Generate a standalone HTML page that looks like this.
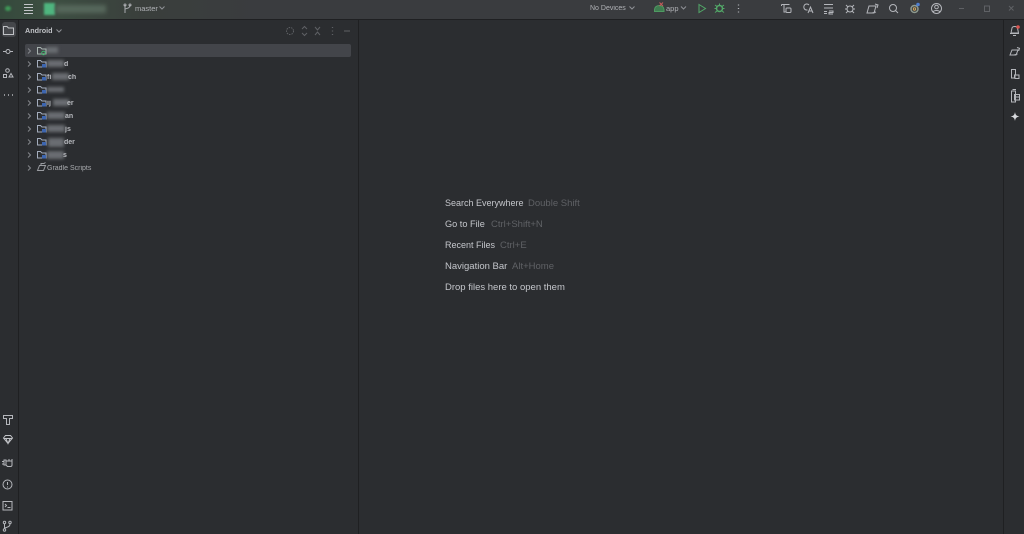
<!DOCTYPE html>
<html><head><meta charset="utf-8"><style>
html,body{margin:0;padding:0;background:#2b2d30;width:1024px;height:534px;overflow:hidden;font-family:"Liberation Sans","DejaVu Sans",sans-serif}
.t{position:absolute;white-space:nowrap;line-height:12px;filter:blur(.25px)}
.h{font-size:9px;color:#c4c6cb;left:445px}
.k{font-size:9.500px;color:#5f6165}
.n{font-size:7px;color:#b8babf;font-weight:bold;left:47px}
.b{position:absolute;background:#6a6d72;filter:blur(1.5px)}
svg{position:absolute;left:0;top:0;filter:blur(.3px)}
</style></head><body>
<div style="position:absolute;left:0;top:0;width:1024px;height:19px;background:#3a3c3f"></div>
<div style="position:absolute;left:0;top:0;width:260px;height:19px;background:linear-gradient(90deg,#35493c 0,#3d4f42 50px,#3a3f3c 140px,#3a3c3f 100%)"></div>
<div style="position:absolute;left:0;top:19px;width:1024px;height:1px;background:#1f2022"></div>
<div style="position:absolute;left:18px;top:20px;width:1px;height:514px;background:#1f2022"></div>
<div style="position:absolute;left:358px;top:20px;width:1px;height:514px;background:#1f2022"></div>
<div style="position:absolute;left:1003px;top:20px;width:1px;height:514px;background:#1f2022"></div>
<div style="position:absolute;left:2px;top:22px;width:14px;height:15px;border-radius:3px;background:#45474b"></div>
<div style="position:absolute;left:25px;top:44px;width:326px;height:13px;border-radius:2px;background:#43454a"></div>
<div style="position:absolute;left:5px;top:6px;width:6px;height:5px;border-radius:50%;background:#3f9a58;filter:blur(1px)"></div>
<div style="position:absolute;left:44px;top:3px;width:11px;height:12px;background:#4fb57f;filter:blur(1px)"></div>
<div style="position:absolute;left:56px;top:5px;width:50px;height:8px;background:#56675b;filter:blur(2px)"></div>
<div class="b" style="left:46px;top:47px;width:12px;height:6px"></div>
<div class="b" style="left:47px;top:60px;width:17px;height:7px"></div>
<div class="b" style="left:52px;top:73px;width:17px;height:7px"></div>
<div class="b" style="left:47px;top:87px;width:17px;height:5px"></div>
<div class="b" style="left:53px;top:99px;width:16px;height:7px"></div>
<div class="b" style="left:47px;top:112px;width:18px;height:7px"></div>
<div class="b" style="left:47px;top:125px;width:18px;height:7px"></div>
<div class="b" style="left:48px;top:138px;width:16px;height:9px"></div>
<div class="b" style="left:47px;top:151px;width:17px;height:8px"></div>

<svg width="1024" height="534" viewBox="0 0 1024 534" fill="none" stroke="#b4b6bb" stroke-width="1">
<!-- hamburger -->
<path d="M24 4.500h9M24 7.500h9M24 10.500h9M24 13.500h9" stroke="#c2c4c8"/>
<!-- branch -->
<path d="M125 5v6M130 5c0 3-2 3-5 4M125 11v2" stroke="#a8aaae"/>
<circle cx="125" cy="5" r="1" stroke="#a8aaae"/><circle cx="130" cy="5" r="1" stroke="#a8aaae"/>
<path d="M159.500 6.500l2.500 2.500 2.500-2.500M56.500 29.500l2.500 2.500 2.500-2.500M629.500 6.500l2.500 2.500 2.500-2.500M681 6.500l2.500 2.500 2.500-2.500" stroke="#8f9196"/>
<!-- left rail -->
<path d="M3.500 26.500h3.500l1.500 1.500h5v6.500h-10z" stroke="#c0c2c6"/>
<path d="M3 51.500h3M10 51.500h3" stroke="#b4b6bb"/><circle cx="8" cy="51.500" r="2"/>
<circle cx="7.500" cy="70.500" r="1.800"/><rect x="3.500" y="74.500" width="3" height="3"/><path d="M11 73.500l2 3.500h-4z"/>
<path d="M4 95h1M8 95h1M12 95h1" stroke-width="1.500"/>
<path d="M3.500 415.500h9v3h-3v6h-3v-6h-3z"/>
<path d="M3.500 438l2-2.500h5l2 2.500-4.500 5.500zM3.500 438.500h9M6 438.500l2 5 2-5" stroke="#c0c2c6"/>
<path d="M4 460h2v5H4zM6 461h6v4a1.500 1.500 0 0 1-1.500 1.500H7.500L6 465M2 461.500h2M2 464h2M9 459v2M12 459v2"/>
<circle cx="7.500" cy="484.500" r="4.500"/><path d="M7.500 482v3M7.500 486.500v1"/>
<rect x="3" y="501.500" width="9" height="8.500"/><path d="M5 504l1.500 1.500L5 507M7.500 507.500h3"/>
<circle cx="4.500" cy="522.500" r="1.200"/><circle cx="10" cy="522.500" r="1.200"/><circle cx="4.500" cy="530" r="1.200"/><path d="M4.500 524v5M10 524c0 3-3 3-5 4"/>
<!-- panel tools -->
<g stroke="#5f6165">
<circle cx="290" cy="31" r="3.500" stroke-dasharray="1.500 1"/>
<path d="M302 29l2.500-2.500 2.500 2.500M302 33l2.500 2.500 2.500-2.500M315 27l2.500 3 2.500-3M315 35l2.500-3 2.500 3M344 31h6"/>
<path d="M332.500 27v1M332.500 30.500v1M332.500 34v1" stroke-width="1.300"/>
</g>
<!-- tree chevrons -->
<g stroke="#85878c">
<path d="M28 48.500l2.500 2.500-2.500 2.500M28 61.500l2.500 2.500-2.500 2.500M28 74.500l2.500 2.500-2.500 2.500M28 87.500l2.500 2.500-2.500 2.500M28 100.500l2.500 2.500-2.500 2.500M28 113.500l2.500 2.500-2.500 2.500M28 126.500l2.500 2.500-2.500 2.500M28 139.500l2.500 2.500-2.500 2.500M28 152.500l2.500 2.500-2.500 2.500M28 165.500l2.500 2.500-2.500 2.500"/>
</g>
<!-- folders -->
<g id="f">
<path d="M37.500 47.500h3l1.500 1.500h4v5h-8.500z" stroke="#a9b4b0"/><circle cx="43.500" cy="53" r="1.800" stroke="#3fae6a"/>
<path d="M37.500 60.500h3l1.500 1.500h4v5h-8.500z" stroke="#a4adbd"/><rect x="42" y="64" width="4" height="3.500" fill="#3d66b0" stroke="none"/>
<path d="M37.500 73.500h3l1.500 1.500h4v5h-8.500z" stroke="#a4adbd"/><rect x="42" y="77" width="4" height="3.500" fill="#3d66b0" stroke="none"/>
<path d="M37.500 86.500h3l1.500 1.500h4v5h-8.500z" stroke="#a4adbd"/><rect x="42" y="90" width="4" height="3.500" fill="#3d66b0" stroke="none"/>
<path d="M37.500 99.500h3l1.500 1.500h4v5h-8.500z" stroke="#a4adbd"/><rect x="42" y="103" width="4" height="3.500" fill="#3d66b0" stroke="none"/>
<path d="M37.500 112.500h3l1.500 1.500h4v5h-8.500z" stroke="#a4adbd"/><rect x="42" y="116" width="4" height="3.500" fill="#3d66b0" stroke="none"/>
<path d="M37.500 125.500h3l1.500 1.500h4v5h-8.500z" stroke="#a4adbd"/><rect x="42" y="129" width="4" height="3.500" fill="#3d66b0" stroke="none"/>
<path d="M37.500 138.500h3l1.500 1.500h4v5h-8.500z" stroke="#a4adbd"/><rect x="42" y="142" width="4" height="3.500" fill="#3d66b0" stroke="none"/>
<path d="M37.500 151.500h3l1.500 1.500h4v5h-8.500z" stroke="#a4adbd"/><rect x="42" y="155" width="4" height="3.500" fill="#3d66b0" stroke="none"/>
<path d="M37.500 170.500l2-5h6l-2 5zM41 165v-1.500h3l1.500-1" stroke="#9a9ca1"/>
</g>
<!-- run area -->
<path d="M654.500 11.500h9.500v-2a4.750 4 0 0 0-9.500 0z" stroke="#4f9a62" fill="#3f7c50"/>
<path d="M659.500 2.500l3.500 3.500M663 2.500l-3.500 3.500" stroke="#c65a5a"/>
<path d="M699 4.500l6.500 4-6.500 4z" stroke="#52a868"/>
<circle cx="719.500" cy="8.500" r="3" stroke="#52a868" stroke-width="1.500"/><path d="M715 5l2 1.500M724 5l-2 1.500M714.500 8.500h2M722.500 8.500h2M715 12.500l2-1.500M724 12.500l-2-1.500M719.500 3.500v1.500" stroke="#52a868"/>
<path d="M738.500 4.500v1M738.500 8v1M738.500 11.500v1" stroke-width="1.300"/>
<!-- toolbar right -->
<path d="M781.500 4.500h8M781.500 4.500v1.500M784 4.500v7.500h1.500"/><rect x="786" y="8" width="5" height="4.500" rx="1"/>
<path d="M809 5a3 3 0 1 0-2.500 5h1"/><path d="M808 13l2.500-6 2.500 6M809 11h3"/>
<path d="M824 4.500h9M824 8h9M824 11.500h3M824 13.500h3M829 11h4v1.500h-4v1.500h4"/>
<path d="M846 5l2 2M854 5l-2 2M845 9h2M853 9h2M846 13l2-2M854 13l-2-2"/><circle cx="850" cy="9" r="3"/>
<path d="M867 13l2-7h7l-2 7zM875 4l3 1-1 3M872 13l4-1"/>
<circle cx="893" cy="8" r="3.500"/><path d="M895.500 10.500l2.500 2.500"/>
<circle cx="914.500" cy="9" r="3.500" stroke="#8d9a8f" stroke-width="1.500"/><circle cx="914.500" cy="9" r="1.200" stroke="#d0a860"/><circle cx="918" cy="4.500" r="1.800" fill="#4f7fd0" stroke="none"/>
<circle cx="936.500" cy="8.500" r="5"/><circle cx="936.500" cy="7" r="1.800"/><path d="M933 12c1-2 6-2 7 0"/>
<path d="M959 8.500h5M984.500 6h5v5.500h-5zM1009 6l4.500 4.500M1013.500 6l-4.500 4.500" stroke="#5f6165"/>
<!-- right rail -->
<path d="M1011 33l1-5c.5-2 5-2 5.500 0l1 5zM1010 33.500h9M1013 35.500h3"/><circle cx="1018" cy="27" r="1.800" fill="#d9534f" stroke="none"/>
<path d="M1010 55l2-5h6l-2 5zM1017 47.500l2.500.8-.8 2.500M1014 55l3.500-1"/>
<path d="M1011.500 69.500h4v5l-1 .5v3h-3zM1015 75h4v3.500h-4z"/>
<path d="M1011.500 91h4v11h-4zM1014.500 94.500h5v5.500h-5zM1014.500 97h5M1013 90v-.5h3"/>
<path d="M1015 112c.5 3 1.500 4 4.500 4.500-3 .5-4 1.500-4.500 4.500-.5-3-1.500-4-4.500-4.500 3-.5 4-1.500 4.500-4.500z" fill="#d8dade" stroke="none"/>
</svg>

<div class="t" style="left:135px;top:3px;font-size:7.500px;color:#b0b2b6">master</div>
<div class="t" style="left:25px;top:25px;font-size:7.200px;font-weight:bold;color:#c0c2c6">Android</div>
<div class="t" style="left:590px;top:3px;font-size:7px;color:#b0b2b6">No Devices</div>
<div class="t" style="left:666px;top:3px;font-size:7.500px;color:#b0b2b6">app</div>
<div class="t n" style="left:64px;top:59px">d</div>
<div class="t n" style="left:47px;top:72px">fi</div>
<div class="t n" style="left:68px;top:72px">ch</div>
<div class="t n" style="left:47px;top:98px">ij</div>
<div class="t n" style="left:67px;top:98px">er</div>
<div class="t n" style="left:65px;top:111px">an</div>
<div class="t n" style="left:65px;top:124px">js</div>
<div class="t n" style="left:64px;top:137px">der</div>
<div class="t n" style="left:63px;top:150px">s</div>
<div class="t" style="left:47px;top:163px;font-size:7px;color:#a8aaae">Gradle Scripts</div>

<div class="t h" style="top:197px">Search Everywhere</div>
<div class="t k" style="left:528px;top:198px">Double Shift</div>
<div class="t h" style="top:218px;font-size:9.200px">Go to File</div>
<div class="t k" style="left:491px;top:219px">Ctrl+Shift+N</div>
<div class="t h" style="top:239px">Recent Files</div>
<div class="t k" style="left:500px;top:240px">Ctrl+E</div>
<div class="t h" style="top:261px;font-size:9.500px">Navigation Bar</div>
<div class="t k" style="left:512px;top:261px">Alt+Home</div>
<div class="t h" style="top:282px;font-size:9.500px">Drop files here to open them</div>
</body></html>
